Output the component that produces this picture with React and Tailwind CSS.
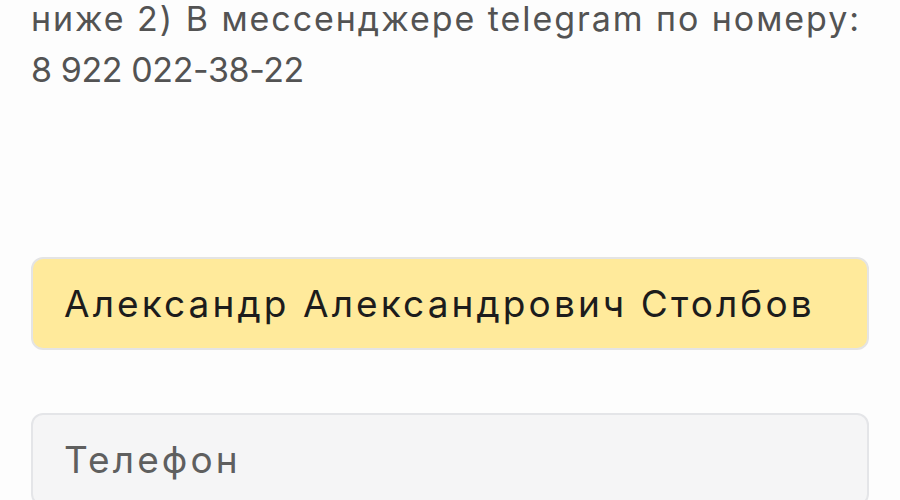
export default function App() {
  return (
    <div className="min-h-[500px] w-[900px] overflow-hidden bg-[#fdfdfd] px-[31px] font-[family-name:Inter,sans-serif]">
      <p className="-mt-[7px] text-[34px] leading-[51px] tracking-[1.95px] text-[#535353]">
        ниже 2) В мессенджере telegram по номеру:
        <br />
        <span className="tracking-[-0.4px]">8 922 022-38-22</span>
      </p>

      <form className="mt-[162px] flex flex-col gap-[63px]">
        <input
          type="text"
          readOnly
          value="Александр Александрович Столбов"
          className="h-[93px] w-full rounded-[12px] border-2 border-[#e4e4e4] bg-[#ffea9b] px-[31px] text-[37px] tracking-[3.1px] text-[#1c1c1c] outline-none"
        />
        <input
          type="tel"
          readOnly
          placeholder="Телефон"
          className="h-[93px] w-full rounded-[12px] border-2 border-[#e4e5e8] bg-[#f5f5f6] px-[31px] text-[37px] tracking-[3.1px] text-[#1c1c1c] outline-none placeholder:text-[#5f5f5f]"
        />
      </form>
    </div>
  );
}
